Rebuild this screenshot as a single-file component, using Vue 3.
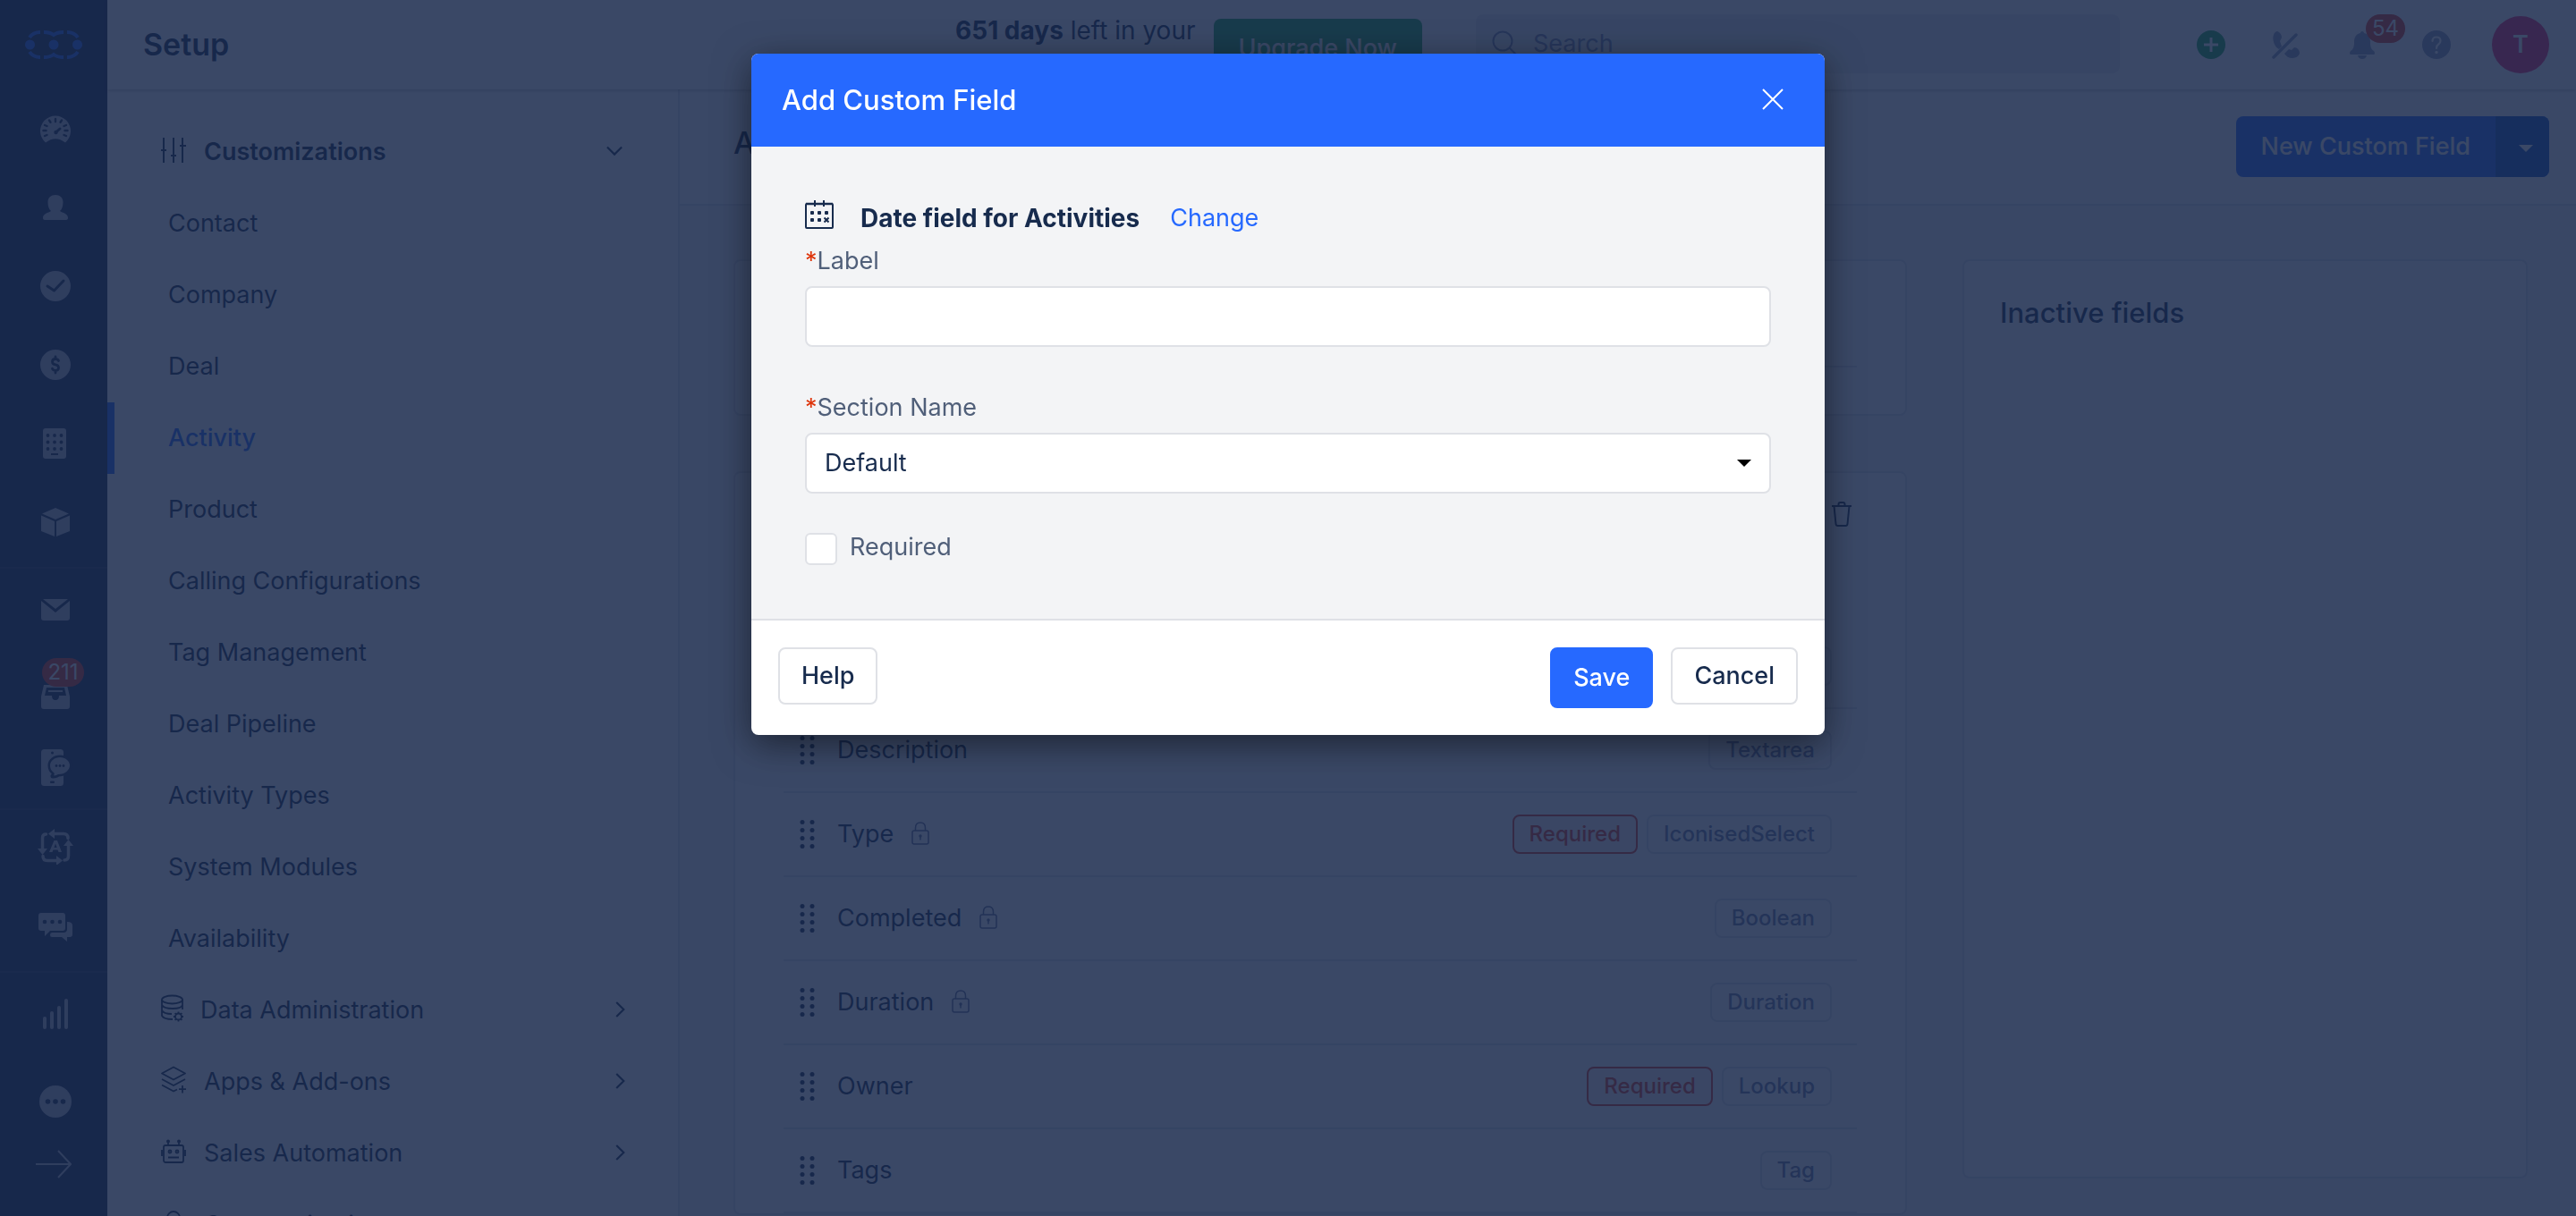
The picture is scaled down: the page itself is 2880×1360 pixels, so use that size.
<script setup>
import { ref } from 'vue'

const railGroups = [
  [
    { icon: 'gauge', label: 'Dashboard' },
    { icon: 'person', label: 'Contacts' },
    { icon: 'check', label: 'Activities' },
    { icon: 'dollar', label: 'Deals' },
    { icon: 'building', label: 'Companies' },
    { icon: 'box', label: 'Products' }
  ],
  [
    { icon: 'mail', label: 'Email' },
    { icon: 'inbox', label: 'Inbox', count: 211 },
    { icon: 'phonechat', label: 'Text messages' }
  ],
  [
    { icon: 'cycle', label: 'Automation' },
    { icon: 'chats', label: 'Conversations' }
  ],
  [{ icon: 'bars', label: 'Reports' }]
]

const customizations = [
  'Contact', 'Company', 'Deal', 'Activity', 'Product', 'Calling Configurations',
  'Tag Management', 'Deal Pipeline', 'Activity Types', 'System Modules', 'Availability'
]
const activeItem = 'Activity'

const sections = [
  { icon: 'database', label: 'Data Administration' },
  { icon: 'layers', label: 'Apps & Add-ons' },
  { icon: 'robot', label: 'Sales Automation' },
  { icon: 'ring', label: 'Communication' }
]

const fields = [
  { name: 'Title', type: 'Text' },
  { name: 'Description', type: 'Textarea' },
  { name: 'Type', type: 'IconisedSelect', locked: true, required: true },
  { name: 'Completed', type: 'Boolean', locked: true },
  { name: 'Duration', type: 'Duration', locked: true },
  { name: 'Owner', type: 'Lookup', required: true },
  { name: 'Tags', type: 'Tag' }
]

const label = ref('')
const section = ref('Default')
const required = ref(false)
</script>

<template>
  <div class="app">
    <svg class="sprite" aria-hidden="true">
      <symbol id="logo" viewBox="0 0 64 32">
        <g fill="none" stroke="currentColor" stroke-width="4">
          <path d="M5 8Q9 2 17 2M21 2Q28 2 32 5Q36 2 43 2M47 2Q55 2 59 8M5 24Q9 30 17 30M21 30Q28 30 32 27Q36 30 43 30M47 30Q55 30 59 24" />
        </g>
        <g fill="currentColor"><circle cx="5.500" cy="16" r="5.500" /><circle cx="32" cy="16" r="5.500" /><circle cx="58.500" cy="16" r="5.500" /></g>
      </symbol>
      <symbol id="gauge" viewBox="0 0 40 40">
        <path fill="currentColor" d="M9 35.500A17 17 0 1 1 31 35.500Q20 27 9 35.500Z" />
        <g class="cut" fill="none" stroke-width="2.400" stroke-linecap="round">
          <path d="M8 28l2.500-1M6.500 22h3M8 16l2.500 1M13 10.500l1.500 2.200M20 9v3M27 10.500l-1.500 2.200M32 16l-2.500 1M33.500 22h-3M32 28l-2.500-1" />
          <path d="M20.500 24l4.500-4" stroke-width="3" /><circle cx="20.500" cy="24" r="1" />
        </g>
      </symbol>
      <symbol id="person" viewBox="0 0 40 40">
        <path fill="currentColor" d="M20 6c5 0 8.500 3 8.500 8 0 4-1 8-3.500 10 3 2 9 3 9 7.500 0 1.500-.5 2.500-2 2.500H8c-1.500 0-2-1-2-2.500C6 27 12 26 15 24c-2.500-2-3.500-6-3.500-10 0-5 3.500-8 8.500-8Z" />
      </symbol>
      <symbol id="check" viewBox="0 0 40 40">
        <circle cx="20" cy="20" r="17" fill="currentColor" />
        <path class="cut" d="M11 20l7.500 5L29 14" fill="none" stroke-width="3" stroke-linecap="round" stroke-linejoin="round" />
      </symbol>
      <symbol id="dollar" viewBox="0 0 40 40">
        <circle cx="20" cy="20" r="17" fill="currentColor" />
        <path class="cut" d="M23.500 15.500q-1-2-3.500-2-3.500 0-3.500 3t3.500 3.300q3.500.4 3.500 3.500t-3.500 3q-2.500 0-3.500-2M20 11v2.500M20 26.500V29" fill="none" stroke-width="2.800" stroke-linecap="round" />
      </symbol>
      <symbol id="building" viewBox="0 0 40 40">
        <rect x="6" y="3" width="26" height="34" rx="3" fill="currentColor" />
        <g class="cutfill"><circle cx="11.500" cy="11" r="1.900" /><circle cx="19" cy="11" r="1.900" /><circle cx="26.500" cy="11" r="1.900" /><circle cx="11.500" cy="18.500" r="1.900" /><circle cx="19" cy="18.500" r="1.900" /><circle cx="26.500" cy="18.500" r="1.900" /><circle cx="11.500" cy="26" r="1.900" /><circle cx="19" cy="26" r="1.900" /><circle cx="26.500" cy="26" r="1.900" /><rect x="15" y="31" width="8" height="2" /></g>
      </symbol>
      <symbol id="box" viewBox="0 0 40 40">
        <path fill="currentColor" d="M20 4l15 6.500-15 6.500L5 10.500ZM4 12.500l15 6.500v17L4 30ZM36 12.500L21 19v17l15-6Z" />
      </symbol>
      <symbol id="mail" viewBox="0 0 40 40">
        <path fill="currentColor" d="M6 8h28L20 19ZM4 10l16 13L36 10v19q0 3-3 3H7q-3 0-3-3Z" />
      </symbol>
      <symbol id="inbox" viewBox="0 0 40 60">
        <path fill="currentColor" fill-rule="evenodd" d="M7 26h26l3 13v11q0 3-3 3H7q-3 0-3-3V39ZM10 29L8 38h8q0 5 4 5t4-5h8l-2-9Z" />
        <path fill="none" stroke="currentColor" stroke-width="2" d="M12 33h16" />
      </symbol>
      <symbol id="phonechat" viewBox="0 0 40 44">
        <rect x="4" y="2" width="25" height="41" rx="3.500" fill="currentColor" />
        <g class="cutfill"><circle cx="16.500" cy="6" r="1.500" /><rect x="14" y="37.500" width="5" height="2.500" rx="1" /></g>
        <path class="cut cutfill" stroke-width="5" stroke-linejoin="round" d="M25 11c6 0 11 4 11 9s-5 10-13 10c-2 2-4 2-6 2 2-2 1-3 1-4-3-2-4-5-4-8 0-5 5-9 11-9Z" />
        <path fill="currentColor" d="M25 11c6 0 11 4 11 9s-5 10-13 10c-2 1-4 2-5 1 1-1 1-2 0-3-3-2-4-5-4-8 0-5 5-9 11-9Z" />
        <g class="cutfill"><circle cx="21" cy="20.500" r="1.400" /><circle cx="25" cy="20.500" r="1.400" /><circle cx="29" cy="20.500" r="1.400" /></g>
      </symbol>
      <symbol id="cycle" viewBox="0 0 40 40">
        <g fill="none" stroke="currentColor" stroke-width="3.500" stroke-linecap="round">
          <path d="M17 5.500h12q5 0 5 5M34.500 17v13q0 5-4.500 5M24 35.500H11q-5 0-5-5M5.500 24V10q0-4 4-4" />
        </g>
        <g fill="currentColor">
          <path d="M12 5.500l7-5.500v11ZM28 35.500l-7-5.500v11ZM5.500 29L0 22h11ZM34.500 12L29 19h11Z" />
          <path fill-rule="evenodd" d="M13 26l5.500-13h3.500L27 26h-3.500l-1-2.500h-5L16.500 26ZM18.500 21h3.200L20 16.500Z" />
        </g>
      </symbol>
      <symbol id="chats" viewBox="0 0 40 40">
        <path fill="currentColor" d="M4 4h24q3 0 3 3v14q0 3-3 3H14l-6 6v-6H4q-3 0-3-3V7q0-3 3-3Z" />
        <path fill="currentColor" d="M33 14q6 0 6 4v10q0 3-3 3h-3v5l-6-5H16q-2 0-2-2.500t2-2.500h13q4 0 4-4Z" />
        <g class="cutfill"><circle cx="8" cy="14" r="2.300" /><circle cx="16.500" cy="14" r="2.300" /><circle cx="25" cy="14" r="2.300" /></g>
      </symbol>
      <symbol id="bars" viewBox="0 0 40 40">
        <path fill="none" stroke="currentColor" stroke-width="4" stroke-linecap="round" d="M8 35V25M16 35V19M24 35V13M32 35V5" />
      </symbol>
      <symbol id="more" viewBox="0 0 40 40">
        <circle cx="20" cy="20" r="18" fill="currentColor" />
        <g class="cutfill"><circle cx="11.500" cy="20" r="2.800" /><circle cx="20" cy="20" r="2.800" /><circle cx="28.500" cy="20" r="2.800" /></g>
      </symbol>
      <symbol id="arrow" viewBox="0 0 40 40">
        <path d="M0 20h39M25 5l14 15-14 15" fill="none" stroke="currentColor" stroke-width="2" />
      </symbol>
      <symbol id="sliders" viewBox="0 0 28 28">
        <path d="M3 0v28M14 0v28M24 0v28M0 14h6M11 20h6M21 9h7" fill="none" stroke="currentColor" stroke-width="2" />
      </symbol>
      <symbol id="database" viewBox="0 0 28 32">
        <g fill="none" stroke="currentColor" stroke-width="1.800">
          <ellipse cx="12.500" cy="6" rx="11.500" ry="4.500" />
          <path d="M1 6v18q2 4 12 4M24 6v11M1 12q2 4 12 4t11-4M1 18q2 4 11 4" />
          <circle cx="19.500" cy="25" r="3.500" />
          <path d="M19.500 19.500v2M19.500 28.500v2M14 25h2M23 25h2M15.600 21.100l1.400 1.400M22 27.500l1.400 1.400M15.600 28.900l1.400-1.400M22 22.500l1.400-1.400" />
        </g>
      </symbol>
      <symbol id="layers" viewBox="0 0 28 32">
        <g fill="none" stroke="currentColor" stroke-width="1.800" stroke-linejoin="round">
          <path d="M14 1.500L27 8.500 14 15.500 1 8.500ZM1 15l13 7 13-7M1 21.500l13 7 4-2M24 22v8.500M20 26.200h8" />
        </g>
      </symbol>
      <symbol id="robot" viewBox="0 0 28 32">
        <g fill="none" stroke="currentColor" stroke-width="1.800">
          <rect x="3" y="9" width="22" height="19" rx="2" /><path d="M8 9V4M20 9V4M1 14v7M27 14v7M8 22.500h12" />
          <circle cx="10" cy="16" r="1.500" /><circle cx="18" cy="16" r="1.500" />
        </g>
        <g fill="currentColor"><circle cx="8" cy="4.500" r="2" /><circle cx="20" cy="4.500" r="2" /></g>
      </symbol>
      <symbol id="ring" viewBox="0 0 28 32">
        <circle cx="14" cy="10" r="7" fill="none" stroke="currentColor" stroke-width="1.800" /><path d="M2 31q0-12 12-12t12 12" fill="none" stroke="currentColor" stroke-width="1.800" />
      </symbol>
      <symbol id="down" viewBox="0 0 20 20"><path d="M1 5l9 9 9-9" fill="none" stroke="currentColor" stroke-width="2.400" /></symbol>
      <symbol id="right" viewBox="0 0 20 20"><path d="M8 1l9 9-9 9" fill="none" stroke="currentColor" stroke-width="2.400" /></symbol>
      <symbol id="caret" viewBox="0 0 16 8"><path d="M0 0h16L8 8Z" fill="currentColor" /></symbol>
      <symbol id="search" viewBox="0 0 30 30"><g fill="none" stroke="currentColor" stroke-width="2"><circle cx="12" cy="12" r="10.500" /><path d="M19.500 19.500L29 29" /></g></symbol>
      <symbol id="trash" viewBox="0 0 22 28">
        <path d="M0 5h22M2.500 5l2 20q.2 2 2 2h9q1.800 0 2-2l2-20M7.500 5V3q0-2 2-2h3q2 0 2 2v2" fill="none" stroke="currentColor" stroke-width="2" />
      </symbol>
      <symbol id="lock" viewBox="0 0 20 26">
        <g fill="none" stroke="currentColor" stroke-width="1.500"><rect x="1" y="10" width="18" height="15" rx="2" /><path d="M4.500 10V7q0-6 5.500-6t5.500 6v3" /></g>
        <circle cx="10" cy="16" r="1.700" fill="currentColor" /><path d="M10 16v4.500" stroke="currentColor" stroke-width="1.500" />
      </symbol>
      <symbol id="grip" viewBox="0 0 18 34">
        <g fill="currentColor"><circle cx="3" cy="3.500" r="2.500" /><circle cx="14" cy="3.500" r="2.500" /><circle cx="3" cy="12.500" r="2.500" /><circle cx="14" cy="12.500" r="2.500" /><circle cx="3" cy="21.500" r="2.500" /><circle cx="14" cy="21.500" r="2.500" /><circle cx="3" cy="30.500" r="2.500" /><circle cx="14" cy="30.500" r="2.500" /></g>
      </symbol>
      <symbol id="plus" viewBox="0 0 32 32"><circle cx="16" cy="16" r="16" fill="currentColor" /><path d="M16 8v16M8 16h16" stroke="#fff" stroke-width="3" /></symbol>
      <symbol id="call" viewBox="0 0 32 32">
        <path d="M2 13C0 6 3 1 6 1c3 1 5 4 5 7l-2 4 2 6-3 3Q3 18 2 13ZM14 26l5-5 3 1 3-3c3 0 6 3 6 6 0 3-4 6-8 6s-7-2-9-5Z" fill="currentColor" />
        <path d="M27 5L2 30" stroke="currentColor" stroke-width="3.500" stroke-linecap="round" />
      </symbol>
      <symbol id="bell" viewBox="0 0 32 32">
        <path d="M17 1c1.500 0 2 1 2 2 5 1 7 5 7 10 0 6 1 8 4 10q1 1 1 2.500T29.500 27h-25Q3 27 3 25.500T4 23c3-2 4-4 4-10 0-5 2-9 7-10 0-1 .5-2 2-2ZM12 28h10q-1 4-5 4t-5-4Z" fill="currentColor" />
      </symbol>
      <symbol id="help" viewBox="0 0 32 32">
        <circle cx="16" cy="16" r="16" fill="currentColor" />
        <path d="M11.500 12q0-4.500 4.500-4.500t4.500 4.200q0 2.300-2.200 3.800-2.300 1.500-2.300 4.500" fill="none" stroke="#fff" stroke-width="2.200" stroke-linecap="round" /><circle cx="16" cy="24.500" r="1.700" fill="#fff" />
      </symbol>
      <symbol id="close" viewBox="0 0 24 24"><path d="M1 1l22 22M23 1L1 23" stroke="currentColor" stroke-width="2" /></symbol>
      <symbol id="calendar" viewBox="0 0 32 32">
        <g fill="none" stroke="currentColor" stroke-width="2"><rect x="1" y="4" width="30" height="27" rx="1" /><path d="M11 0v7M21 0v7" /><path d="M21.500 19.500l5 5M26.500 19.500l-5 5" /></g>
        <path d="M1 4h30" stroke="currentColor" stroke-width="2.500" />
        <g fill="currentColor"><rect x="6" y="12" width="4" height="4" rx="1" /><rect x="14" y="12" width="4" height="4" rx="1" /><rect x="22" y="12" width="4" height="4" rx="1" /><rect x="6" y="20" width="4" height="4" rx="1" /><rect x="14" y="20" width="4" height="4" rx="1" /></g>
      </symbol>
    </svg>

    <aside class="rail">
      <a href="#" class="brand" aria-label="Home"><svg class="logo"><use href="#logo" /></svg></a>
      <nav v-for="(group, i) in railGroups" :key="i" class="rail-group" aria-label="Modules">
        <a v-for="item in group" :key="item.icon" href="#" class="rail-link" :aria-label="item.label">
          <svg :class="['rail-icon', item.icon]"><use :href="'#' + item.icon" /></svg>
          <span v-if="item.count" class="count rail-count">{{ item.count }}</span>
        </a>
      </nav>
      <div class="rail-foot">
        <a href="#" class="rail-link" aria-label="More"><svg class="rail-icon"><use href="#more" /></svg></a>
        <button class="expand" aria-label="Expand menu"><svg class="rail-icon"><use href="#arrow" /></svg></button>
      </div>
    </aside>

    <div class="main">
      <header class="topbar">
        <h1 class="page-name">Setup</h1>
        <div class="promo">
          <p class="trial"><strong>651 days</strong> left in your</p>
          <button class="upgrade">Upgrade Now</button>
        </div>
        <label class="search">
          <svg class="search-icon"><use href="#search" /></svg>
          <input type="search" placeholder="Search" aria-label="Search" />
        </label>
        <div class="tools">
          <button class="tool add" aria-label="Add"><svg><use href="#plus" /></svg></button>
          <button class="tool" aria-label="Calls"><svg><use href="#call" /></svg></button>
          <button class="tool" aria-label="Notifications"><svg><use href="#bell" /></svg><span class="count bell-count">54</span></button>
          <button class="tool" aria-label="Help"><svg><use href="#help" /></svg></button>
        </div>
        <button class="avatar">T</button>
      </header>

      <div class="workspace">
        <nav class="settings" aria-label="Setup">
          <a href="#" class="set-head strong"><svg class="set-icon"><use href="#sliders" /></svg><span>Customizations</span><svg class="chev down"><use href="#down" /></svg></a>
          <a v-for="item in customizations" :key="item" href="#" :class="['set-item', { active: item === activeItem }]">{{ item }}</a>
          <a v-for="s in sections" :key="s.label" href="#" :class="['set-head', s.icon]"><svg class="set-icon"><use :href="'#' + s.icon" /></svg><span>{{ s.label }}</span><svg class="chev"><use href="#right" /></svg></a>
        </nav>

        <main class="content">
          <div class="content-head">
            <h2>Activity Fields</h2>
            <div class="split">
              <button class="new-field">New Custom Field</button>
              <button class="new-more" aria-label="More options"><svg class="caret"><use href="#caret" /></svg></button>
            </div>
          </div>
          <div class="boards">
            <div class="active-fields">
              <section class="card intro"><div class="intro-line"></div></section>
              <section class="card">
                <div class="card-head"><button class="trash" aria-label="Delete section"><svg><use href="#trash" /></svg></button></div>
                <ul class="fields">
                  <li v-for="f in fields" :key="f.name" class="field">
                    <svg class="grip"><use href="#grip" /></svg>
                    <span class="field-name">{{ f.name }}</span>
                    <svg v-if="f.locked" class="lock"><use href="#lock" /></svg>
                    <span class="tags">
                      <span v-if="f.required" class="tag must">Required</span>
                      <span class="tag">{{ f.type }}</span>
                    </span>
                  </li>
                </ul>
              </section>
            </div>
            <section class="card inactive"><h3>Inactive fields</h3></section>
          </div>
        </main>
      </div>
    </div>

    <div class="overlay">
      <form class="modal" role="dialog" aria-labelledby="dialog-title" @submit.prevent>
        <header class="modal-head">
          <h2 id="dialog-title">Add Custom Field</h2>
          <button type="button" class="close" aria-label="Close"><svg><use href="#close" /></svg></button>
        </header>
        <div class="modal-body">
          <div class="kind">
            <svg class="kind-icon"><use href="#calendar" /></svg>
            <strong>Date field for Activities</strong>
            <a href="#">Change</a>
          </div>
          <label class="caption" for="field-label"><span class="star">*</span>Label</label>
          <input id="field-label" v-model="label" class="control" type="text" />
          <label class="caption second" for="field-section"><span class="star">*</span>Section Name</label>
          <div class="select">
            <select id="field-section" v-model="section" class="control"><option>Default</option></select>
            <svg class="caret"><use href="#caret" /></svg>
          </div>
          <div class="tick">
            <input id="field-required" v-model="required" type="checkbox" />
            <label for="field-required">Required</label>
          </div>
        </div>
        <footer class="modal-foot">
          <button type="button" class="btn">Help</button>
          <button type="submit" class="btn save">Save</button>
          <button type="button" class="btn">Cancel</button>
        </footer>
      </form>
    </div>
  </div>
</template>

<style>
body { margin: 0; }
</style>

<style scoped>
.app { display: flex; height: 100vh; overflow: hidden; background: #fff; color: #172b4d; font: 400 27px/40px Inter, "Open Sans", sans-serif; }
.app *, .app *::before { box-sizing: border-box; }
.sprite { position: absolute; width: 0; height: 0; }
.cut { stroke: #16284b; }
.cutfill { fill: #16284b; }
h1, h2, h3, p, ul { margin: 0; padding: 0; }
a { color: inherit; text-decoration: none; }
button, input, select { font: inherit; color: inherit; margin: 0; }
button { border: 0; background: none; padding: 0; }
svg { display: block; flex: none; }

.rail { flex: none; width: 120px; display: flex; flex-direction: column; background: #16284b; color: #b4b9cb; }
.brand { height: 100px; display: flex; justify-content: center; align-items: center; color: #2669ff; }
.logo { width: 64px; height: 32px; }
.rail-group + .rail-group { border-top: 2px solid #2b3858; padding: 2px 0; }
.rail-group:nth-of-type(1) { padding-bottom: 6px; }
.rail-link { position: relative; display: flex; align-items: center; justify-content: center; height: 88px; padding-left: 3px; }
.rail-icon { width: 40px; height: 40px; }
.rail-icon.inbox { height: 60px; }
.rail-icon.phonechat { height: 44px; }
.rail-group + .rail-group:nth-of-type(3) { display: grid; gap: 8px; padding: 0 0 8px; }
.rail-group:nth-of-type(3) .rail-link { height: 82px; }
.count { position: absolute; background: #de3524; color: #fff; border-radius: 16px; font-size: 24px; line-height: 32px; text-align: center; }
.rail-count { left: 47px; top: 10px; width: 47px; }
.rail-foot { margin-top: auto; padding-bottom: 32px; }
.expand { display: flex; justify-content: center; width: 100%; height: 52px; align-items: center; }

.main { flex: 1; min-width: 0; display: flex; flex-direction: column; }
.topbar { position: relative; flex: none; height: 100px; display: flex; align-items: center; padding: 0 30px 0 40px; box-shadow: 0 2px 4px #0003; }
.page-name { font-size: 34px; font-weight: 600; }
.promo { display: flex; align-items: center; gap: 20px; margin: 8px 60px 0 auto; }
.trial { height: 80px; font-size: 28px; }
.upgrade { height: 66px; padding: 0 28px; border-radius: 8px; background: #1fa553; color: #fff; font-weight: 500; }
.search { display: flex; align-items: center; gap: 16px; width: 25vw; height: 66px; margin-bottom: 2px; padding: 0 18px; border-radius: 8px; background: #ebecf0; color: #7a86ae; }
.search-icon { width: 30px; height: 30px; }
.search input { flex: 1; min-width: 0; border: 0; background: none; outline: 0; padding: 0; }
.search input::placeholder { color: #7a86ae; opacity: 1; }
.tools { display: flex; gap: 52px; margin: 0 46px 0 86px; color: #8d99b8; }
.tool { position: relative; width: 32px; height: 32px; }
.tool svg { width: 32px; height: 32px; }
.add { color: #1fa553; }
.bell-count { left: 21px; top: -18px; width: 44px; }
.avatar { width: 64px; height: 64px; border-radius: 50%; background: #f0266b; color: #fff; font-weight: 600; }

.workspace { flex: 1; min-height: 0; display: flex; }
.settings { flex: none; width: 640px; padding-top: 30px; border-right: 2px solid #dfe1e6; overflow: hidden; }
.set-head, .set-item { display: flex; align-items: center; height: 80px; }
.set-item { padding-left: 68px; }
.set-item.active { border-left: 8px solid #2669ff; padding-left: 60px; color: #2669ff; font-weight: 500; }
.set-head { gap: 20px; padding: 0 58px 0 60px; }
.set-head.database { gap: 16px; }
.set-head span { flex: 1; }
.strong { font-weight: 600; }
.set-icon { width: 28px; height: 32px; margin-bottom: 4px; }
.chev { width: 18px; height: 18px; margin-bottom: 2px; }
.chev.down { margin-right: 4px; }

.content { flex: 1; min-width: 0; background: #f4f5f7; }
.content-head { display: flex; justify-content: space-between; align-items: center; height: 130px; padding: 0 30px 0 60px; background: #fff; border-bottom: 2px solid #dfe1e6; }
.content-head h2 { font-size: 34px; font-weight: 500; padding-bottom: 8px; }
.split { display: flex; height: 68px; border-radius: 8px; overflow: hidden; background: #2669ff; color: #fff; }
.new-field { padding: 0 28px; font-weight: 500; }
.new-more { display: flex; justify-content: center; align-items: center; width: 60px; padding: 4px 0 0 8px; background: #1252c4; }
.caret { width: 16px; height: 8px; }
.boards { display: flex; gap: 62px; align-items: flex-start; padding: 60px 54px 0 60px; }
.active-fields { flex: 1; min-width: 0; display: grid; gap: 62px; }
.card { background: #fff; border: 2px solid #dfe1e6; border-radius: 8px; padding: 0 54px; }
.intro { height: 175px; }
.intro-line { height: 119px; border-bottom: 2px solid #dfe1e6; }
.card-head { display: flex; justify-content: flex-end; align-items: flex-start; height: 170px; padding: 32px 6px 0 0; }
.trash svg { width: 22px; height: 28px; }
.fields { list-style: none; }
.field { display: flex; align-items: center; height: 94px; padding: 0 28px 0 18px; border-bottom: 2px solid #dfe1e6; }
.grip { width: 18px; height: 34px; margin-right: 24px; }
.lock { width: 20px; height: 26px; margin-left: 20px; margin-bottom: 2px; color: #5e6c94; }
.tags { display: flex; gap: 10px; margin-left: auto; }
.tag { border: 2px solid #dfe1e6; border-radius: 8px; padding: 0 17px; font-size: 24px; font-weight: 500; color: #6c78a4; }
.must { border-color: #de3524; background: #ffefee; color: #de3524; }
.inactive { flex: none; width: 632px; height: calc(100vh - 332px); padding: 38px 40px; }
.inactive h3 { font-size: 31px; font-weight: 500; }

.overlay { position: fixed; inset: 0; display: flex; justify-content: center; align-items: flex-start; padding-top: 60px; background: rgba(23, 40, 75, 0.85); }
.modal { width: 1200px; border-radius: 8px; overflow: hidden; background: #fff; box-shadow: 0 10px 40px rgba(0, 0, 0, 0.5); }
.modal-head { display: flex; justify-content: space-between; align-items: center; height: 104px; padding: 0 46px 0 34px; background: #2669ff; color: #fff; }
.modal-head h2 { font-size: 31px; font-weight: 500; }
.close { margin-bottom: 2px; }
.close svg { width: 24px; height: 24px; }
.modal-body { padding: 60px 60px 56px; background: #f3f4f6; border-bottom: 2px solid #dfe1e6; }
.kind { display: flex; align-items: center; height: 40px; }
.kind-icon { width: 32px; height: 32px; margin: 0 30px 8px 0; }
.kind strong { font-size: 28px; font-weight: 700; margin-right: 34px; }
.kind a { color: #2669ff; }
.caption { display: block; margin: 8px 0; color: #505f79; }
.caption.second { margin-top: 48px; }
.star { color: #de350b; }
.control { display: block; width: 100%; height: 68px; padding: 0 20px; border: 2px solid #dfe1e6; border-radius: 8px; background: #fff; outline: 0; appearance: none; }
.select { position: relative; }
.select .caret { position: absolute; right: 22px; top: 30px; color: #000; }
.tick { display: flex; align-items: flex-start; gap: 14px; height: 40px; margin-top: 44px; color: #505f79; }
.tick input { appearance: none; width: 36px; height: 36px; border: 2px solid #dfe1e6; border-radius: 6px; background: #fff; }
.tick label { line-height: 32px; }
.modal-foot { display: flex; align-items: flex-start; gap: 20px; padding: 30px; }
.btn { height: 64px; padding: 0 24px; border: 2px solid #dfe1e6; border-radius: 8px; background: #fff; font-weight: 500; }
.save { height: 68px; margin-left: auto; border-color: #2669ff; background: #2669ff; color: #fff; }
</style>
